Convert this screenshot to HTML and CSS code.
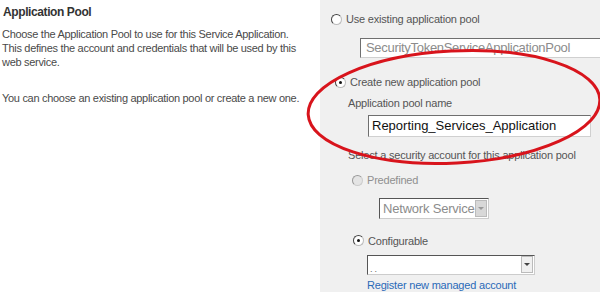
FILE: index.html
```html
<!DOCTYPE html>
<html lang="en">
<head>
    <meta charset="UTF-8">
    <title>Application Pool</title>
    <link rel="stylesheet" href="styles.css">
</head>
<body>

<div class="page">
    <div class="info">
        <h3>Application Pool</h3>
        <p>Choose the Application Pool to use for this Service Application. This defines the account and credentials that will be used by this web service.</p>
        <p>You can choose an existing application pool or create a new one.</p>
    </div>

    <div class="panel">
        <label class="option first"><span class="radio"></span>Use existing application pool</label>
        <div class="box existing">SecurityTokenServiceApplicationPool</div>

        <label class="option create"><span class="radio on"></span>Create new application pool</label>
        <div class="caption">Application pool name</div>
        <div class="box poolname">Reporting_Services_Application</div>

        <div class="caption account">Select a security account for this application pool</div>

        <label class="option sub disabled"><span class="radio"></span>Predefined</label>
        <div class="select predefined">Network Service<span class="arrow"></span></div>

        <label class="option sub config"><span class="radio on"></span>Configurable</label>
        <div class="select managed"><span class="dots">. .</span><span class="arrow"></span></div>
        <a class="link" href="#">Register new managed account</a>
    </div>

    <svg class="circle" width="320" height="140" viewBox="0 0 320 140">
        <ellipse cx="150" cy="62" rx="146" ry="56" transform="rotate(-3 150 62)" fill="none" stroke="#d8141c" stroke-width="3"/>
    </svg>
</div>

</body>
</html>
```

FILE: styles.css
```css
body {
    margin: 0;
    font-family: "Liberation Sans", Arial, sans-serif;
    font-size: 11px;
    color: #4a4a4a;
}
.page {
    position: relative;
    display: flex;
    width: 600px;
    height: 292px;
    overflow: hidden;
}
.info {
    flex-shrink: 0;
    width: 318px;
    padding-left: 2px;
    background-color: white;
    letter-spacing: -0.3px;
}
.info h3 {
    margin: 5px 0 8px 1px;
    font-size: 12px;
    line-height: 14px;
    color: #333;
    letter-spacing: -0.4px;
}
.info p {
    margin: 0 0 22px 0;
    width: 300px;
    line-height: 14px;
}
.panel {
    flex: 1;
    min-width: 0;
    display: flex;
    flex-direction: column;
    align-items: flex-start;
    padding-top: 12px;
    background-color: #f0f0f0;
    color: #555;
    letter-spacing: -0.2px;
}
.option {
    display: flex;
    align-items: center;
    line-height: 14px;
    margin-left: 11px;
}
.radio {
    flex-shrink: 0;
    width: 9px;
    height: 9px;
    margin-right: 4px;
    border: 1px solid;
    border-color: #444 #bbb #bbb #444;
    border-radius: 50%;
    background-color: white;
    position: relative;
}
.radio.on::after {
    content: "";
    position: absolute;
    left: 3px;
    top: 3px;
    width: 3px;
    height: 3px;
    border-radius: 50%;
    background-color: #111;
}
.box {
    flex-shrink: 0;
    height: 18px;
    line-height: 18px;
    padding-left: 5px;
    border: 1px solid;
    border-color: #6f6f6f #d0d0d0 #d0d0d0 #6f6f6f;
    background-color: white;
    font-size: 13px;
    letter-spacing: -0.3px;
    white-space: nowrap;
}
.existing {
    margin: 12px 0 0 40px;
    width: 240px;
    color: #8c8c8c;
}
.create {
    margin: 17px 0 0 15px;
}
.caption {
    margin: 7px 0 0 28px;
    line-height: 14px;
}
.poolname {
    margin: 5px 0 0 48px;
    width: 218px;
    height: 20px;
    line-height: 20px;
    padding-left: 3px;
    color: #111;
    letter-spacing: 0;
}
.account {
    margin-top: 11px;
}
.sub {
    margin: 11px 0 0 32px;
}
.disabled {
    color: #8f8f8f;
}
.disabled .radio {
    border-color: #999 #ccc #ccc #999;
    background-color: #e4e4e4;
}
.select {
    display: flex;
    align-items: center;
    justify-content: space-between;
    height: 19px;
    border: 1px solid;
    border-color: #555 #ccc #ccc #555;
    background-color: white;
    font-size: 13px;
    white-space: nowrap;
}
.predefined {
    margin: 11px 0 0 59px;
    width: 105px;
    padding-left: 3px;
    color: #8c8c8c;
}
.config {
    margin-top: 15px;
    margin-left: 33px;
}
.managed {
    margin: 7px 0 0 47px;
    width: 166px;
    font-size: 9px;
    color: #666;
}
.dots {
    align-self: flex-end;
    padding-left: 2px;
}
.arrow {
    width: 10px;
    height: 15px;
    margin-right: 1px;
    background-color: #e0e0e0;
    border: 1px solid #bbb;
    position: relative;
}
.arrow::after {
    content: "";
    position: absolute;
    left: 2px;
    top: 6px;
    border-left: 3px solid transparent;
    border-right: 3px solid transparent;
    border-top: 3px solid #444;
}
.predefined .arrow {
    background-color: #d8d8d8;
}
.predefined .arrow::after {
    border-top-color: #999;
}
.managed .arrow {
    background-color: #f0f0f0;
}
.link {
    margin: 3px 0 0 47px;
    line-height: 14px;
    color: #2a6ab8;
    text-decoration: none;
}
.circle {
    position: absolute;
    left: 304px;
    top: 45px;
}
```
